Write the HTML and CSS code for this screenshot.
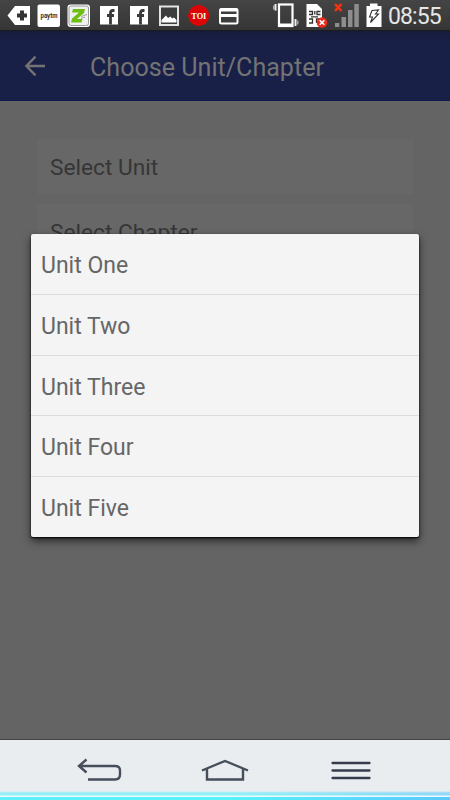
FILE: index.html
```html
<!DOCTYPE html>
<html lang="en">
<head>
    <meta charset="UTF-8">
    <meta name="viewport" content="width=device-width, initial-scale=1.0">
    <title>Choose Unit/Chapter</title>
    <link rel="stylesheet" href="styles.css">
</head>
<body>
    <div class="screen">
        <div class="status-bar">
            <div class="notifications">
                <svg width="24" height="30" viewBox="0 0 24 30">
                    <path d="M0.5 15.5 8 6H23V25H8Z" fill="#fff"/>
                    <path d="M15 10.5V20.500M10 15.500H20" stroke="#333" stroke-width="4"/>
                </svg>
                <svg width="24" height="30" viewBox="0 0 24 30">
                    <rect x="0.500" y="4.500" width="22.500" height="22.500" rx="2" fill="#fff"/>
                    <text class="paytm" x="3.500" y="18" textLength="17" lengthAdjust="spacingAndGlyphs">paytm</text>
                </svg>
                <svg width="24" height="30" viewBox="0 0 24 30">
                    <rect x="0.500" y="4.500" width="22.500" height="22.500" rx="3" fill="#fff"/>
                    <rect x="2" y="6" width="19.500" height="19.500" rx="2" fill="#f1f1f1" stroke="#999"/>
                    <path d="M6 9H18L17 13 10 19H15.500L14.500 22.500H4L5 18.500 12 12.500H5Z" fill="#6ebe14"/>
                    <path d="M14 16.500 20 14.500M14 18.500 18 17" stroke="#888" stroke-width="0.800"/>
                </svg>
                <svg width="24" height="30" viewBox="0 0 24 30">
                    <rect x="3" y="6" width="18" height="18.500" fill="#fff"/>
                    <path d="M17.500 10.500H16Q13.500 10.500 13.500 13V24.500M10 15.500H17" fill="none" stroke="#3a3a3a" stroke-width="2.800"/>
                </svg>
                <svg width="24" height="30" viewBox="0 0 24 30">
                    <rect x="3" y="6" width="18" height="18.500" fill="#fff"/>
                    <path d="M17.500 10.500H16Q13.500 10.500 13.500 13V24.500M10 15.500H17" fill="none" stroke="#3a3a3a" stroke-width="2.800"/>
                </svg>
                <svg width="24" height="30" viewBox="0 0 24 30">
                    <rect x="3" y="6.500" width="18" height="18.500" fill="#3d3d3d" stroke="#e4e4e4" stroke-width="2"/>
                    <path d="M4.500 22.500V20L9 15.500 11 18 13.500 16.500 15 18.500 17 17.500 19.500 20V22.500Z" fill="#fff"/>
                </svg>
                <svg width="24" height="30" viewBox="0 0 24 30">
                    <circle cx="11.700" cy="15.500" r="10.500" fill="#dc0505"/>
                    <text class="toi" x="4.300" y="18.500" textLength="15" lengthAdjust="spacingAndGlyphs">TOI</text>
                </svg>
                <svg width="24" height="30" viewBox="0 0 24 30">
                    <rect x="3" y="9" width="17.500" height="14.500" rx="1.500" fill="#3d3d3d" stroke="#fff" stroke-width="2"/>
                    <path d="M3 10H20.500M3 15.500H20.500" stroke="#fff" stroke-width="3"/>
                </svg>
            </div>
            <div class="system">
                <svg width="26" height="30" viewBox="0 0 26 30">
                    <rect x="6" y="4.500" width="13.500" height="21.500" fill="none" stroke="#fff" stroke-width="2.200"/>
                    <path d="M6 25H19.500" stroke="#fff" stroke-width="3"/>
                    <path d="M2.500 4V10.500M22.500 19V26" stroke="#eee" stroke-width="2"/>
                    <path d="M0.700 5.500V9.500M24.800 20.500V24.500" stroke="#bbb" stroke-width="1.200"/>
                </svg>
                <svg width="23" height="30" viewBox="0 0 23 30">
                    <path d="M1.500 4H12L17 9V27H1.500Z" fill="#fff"/>
                    <path d="M4 11.500H7.500V14.500H4M15.500 11.500H12V14.500H15.500M9.800 11V14.500M4 23H7.500V19H4M15.500 19H11.500V23M6 16.800H13" fill="none" stroke="#333" stroke-width="1.300"/>
                    <circle cx="17" cy="22.500" r="5.300" fill="#e92b1d"/>
                    <path d="M14.700 20.200 19.300 24.800M19.300 20.200 14.700 24.800" stroke="#fff" stroke-width="1.600"/>
                </svg>
                <svg width="26" height="30" viewBox="0 0 26 30">
                    <path d="M1 23H5.300V27H1ZM7.500 17H12V27H7.500ZM14 10H18.500V27H14ZM20.300 4H24.800V27H20.300Z" fill="#8d8d8d"/>
                    <path d="M1 4 7.500 11M7.500 4 1 11" stroke="#fa3210" stroke-width="2.500"/>
                </svg>
                <svg width="16" height="30" viewBox="0 0 16 30">
                    <path d="M0.500 6H4V3.500H11.500V6H15.500V27H0.500Z" fill="#fff"/>
                    <path d="M6 10.500 12.500 10 9.500 14H12.500L4.500 22.500 6.500 17H3.500Z" fill="#fff" stroke="#333" stroke-width="1.100"/>
                </svg>
                <span class="clock">08:55</span>
            </div>
        </div>

        <div class="toolbar">
            <svg class="back" width="22" height="22" viewBox="0 0 22 22">
                <path d="M11.500 1.700 2.400 11 11.500 20.300M2.500 11H21" fill="none" stroke="#737373" stroke-width="2.400"/>
            </svg>
            <span class="title">Choose Unit/Chapter</span>
        </div>

        <div class="content">
            <div class="select">Select Unit</div>
            <div class="select">Select Chapter</div>
            <ul class="popup">
                <li>Unit One</li>
                <li>Unit Two</li>
                <li>Unit Three</li>
                <li>Unit Four</li>
                <li>Unit Five</li>
            </ul>
        </div>

        <div class="nav-bar">
            <div class="nav-icons">
                <svg width="46" height="26" viewBox="0 0 46 26">
                    <path d="M10.500 2.500 3 9 10.500 15.500M3.500 9H39Q44 9 44 13.500V17.500Q44 22.500 39 22.500H12" fill="none" stroke="#464d5b" stroke-width="2.400"/>
                </svg>
                <svg width="50" height="26" viewBox="0 0 50 26">
                    <path d="M2 13.500 25 4 48 13.500M7 12V22.500H43V12" fill="none" stroke="#464d5b" stroke-width="2.400"/>
                </svg>
                <svg width="40" height="26" viewBox="0 0 40 26">
                    <path d="M1.500 6H38.500M1.500 13.500H38.500M1.500 21H38.500" stroke="#363b4b" stroke-width="2.300" stroke-linecap="round"/>
                </svg>
            </div>
            <div class="glow"></div>
        </div>
    </div>
</body>
</html>
```

FILE: styles.css
```css
body {
    margin: 0;
    padding: 0;
    font-family: Roboto, "Noto Sans", sans-serif;
}
.screen {
    width: 450px;
    height: 800px;
    display: flex;
    flex-direction: column;
    overflow: hidden;
    background-color: #646464;
}

.status-bar {
    height: 30px;
    flex: none;
    display: flex;
    justify-content: space-between;
    padding: 0 9px 0 7px;
    background: linear-gradient(#454545, #363636);
    border-bottom: 1px solid #1b1b1d;
}
.status-bar svg {
    display: block;
    flex: none;
}
.notifications {
    display: flex;
    gap: 6px;
}
.system {
    display: flex;
    gap: 6px;
}
.clock {
    width: 53px;
    font-size: 23px;
    letter-spacing: -0.9px;
    line-height: 33px;
    color: #e6e6e6;
    white-space: nowrap;
}
.paytm {
    font: bold 7px Roboto, sans-serif;
    fill: #333;
}
.toi {
    font: bold 8.5px "Liberation Serif", serif;
    fill: #fff;
}

.toolbar {
    height: 69px;
    flex: none;
    display: flex;
    align-items: center;
    gap: 44px;
    padding-left: 24px;
    background: linear-gradient(#171c3b, #192048 12px);
    border-bottom: 1px solid #10194f;
}
.title {
    font-size: 25.1px;
    line-height: 30px;
    padding-top: 4px;
    color: #737373;
}

.content {
    flex: 1;
    position: relative;
    padding: 38px 37px 0 37px;
}
.select {
    height: 55px;
    margin-bottom: 10px;
    padding-left: 13px;
    font-size: 22.7px;
    line-height: 58px;
    color: #363636;
    background-color: #676767;
}
.popup {
    position: absolute;
    left: 31px;
    right: 31px;
    top: 133px;
    margin: 0;
    padding: 0;
    list-style: none;
    background-color: #f4f4f4;
    border-radius: 2px;
    box-shadow: 0 1px 2px #000, 0 4px 9px rgba(0, 0, 0, 0.6);
}
.popup li {
    height: 59.75px;
    padding-left: 10px;
    font-size: 23px;
    line-height: 64px;
    color: #666;
    border-bottom: 1px solid #dcdcdc;
}
.popup li:last-child {
    height: 60px;
    border-bottom: none;
}

.nav-bar {
    height: 60px;
    flex: none;
    background-color: #e9edf0;
    box-shadow: 0 -1px 0 #444;
}
.nav-icons {
    height: 50px;
    display: flex;
    gap: 78px;
    padding: 17px 0 0 76px;
    box-sizing: border-box;
}
.nav-icons svg {
    display: block;
    flex: none;
}
.nav-icons svg:last-child {
    margin-left: 3px;
}
.glow {
    height: 10px;
    background:
        linear-gradient(#e9edf0 0, #e9edf0 1px, rgba(233, 237, 240, 0.4) 3px, rgba(233, 237, 240, 0.4) 5px, #eafaff 6px, #eafaff 7px, transparent 7px),
        linear-gradient(90deg, #5ff0fa, #55f4fa 50%, #5cc8ff);
}
```
